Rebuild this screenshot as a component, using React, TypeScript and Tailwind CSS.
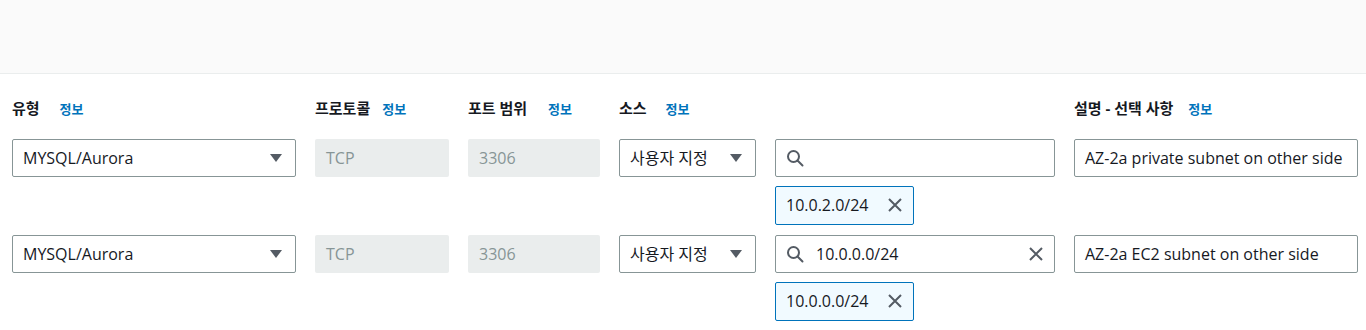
import React from "react";

// ── Data ───────────────────────────────────────────────────────────────────────

type Rule = {
  type: string;
  protocol: string;
  port: string;
  source: string;
  query: string;
  token: string;
  description: string;
};

const RULES: Rule[] = [
  {
    type: "MYSQL/Aurora",
    protocol: "TCP",
    port: "3306",
    source: "사용자 지정",
    query: "",
    token: "10.0.2.0/24",
    description: "AZ-2a private subnet on other side",
  },
  {
    type: "MYSQL/Aurora",
    protocol: "TCP",
    port: "3306",
    source: "사용자 지정",
    query: "10.0.0.0/24",
    token: "10.0.0.0/24",
    description: "AZ-2a EC2 subnet on other side",
  },
];

const FONT = "font-['Open_Sans','Noto_Sans_CJK_KR',sans-serif]";

// ── Icons ──────────────────────────────────────────────────────────────────────

function Caret() {
  return (
    <svg width="14" height="10" viewBox="0 0 14 10" className="shrink-0">
      <path d="M1 1h12L7 9z" fill="#545b64" />
    </svg>
  );
}

function SearchIcon() {
  return (
    <svg width="18" height="18" viewBox="0 0 18 18" className="shrink-0">
      <circle cx="7.5" cy="7.5" r="5.5" fill="none" stroke="#545b64" strokeWidth="2" />
      <path d="M11.5 11.5l5 5" stroke="#545b64" strokeWidth="2" strokeLinecap="round" />
    </svg>
  );
}

function XIcon() {
  return (
    <svg width="16" height="16" viewBox="0 0 16 16" className="shrink-0">
      <path d="M2 2l12 12M14 2L2 14" stroke="#545b64" strokeWidth="2" />
    </svg>
  );
}

// ── Pieces ─────────────────────────────────────────────────────────────────────

function Label({ text, gap }: { text: string; gap: string }) {
  return (
    <div className={`flex items-baseline ${gap}`}>
      <span className="text-[15px] font-bold text-[#16191f]">{text}</span>
      <span className="text-[13px] font-bold text-[#0073bb]">정보</span>
    </div>
  );
}

function SelectBox({ value }: { value: string }) {
  return (
    <div className="flex h-[38px] items-center justify-between rounded-[2px] border border-[#879596] bg-white pl-[10px] pr-[12px] text-[16px] text-[#16191f]">
      <span>{value}</span>
      <Caret />
    </div>
  );
}

function DisabledBox({ value }: { value: string }) {
  return (
    <div className="flex h-[38px] items-center rounded-[2px] bg-[#eaeded] px-[11px] text-[16px] text-[#879596]">
      {value}
    </div>
  );
}

function Token({ value }: { value: string }) {
  return (
    <div className="mt-[9px] flex h-[39px] w-[139px] items-center justify-between rounded-[2px] border border-[#0073bb] bg-[#f1faff] pl-[10px] pr-[10px] text-[16px] text-[#16191f]">
      <span>{value}</span>
      <XIcon />
    </div>
  );
}

function SearchBox({ query }: { query: string }) {
  return (
    <div className="flex h-[38px] items-center gap-[12px] rounded-[2px] border border-[#879596] bg-white pl-[10px] pr-[10px] text-[16px] text-[#16191f]">
      <SearchIcon />
      <span className="flex-1">{query}</span>
      {query && <XIcon />}
    </div>
  );
}

// ── Main ───────────────────────────────────────────────────────────────────────

export default function App() {
  return (
    <div className={`h-[330px] w-[1366px] overflow-hidden bg-white ${FONT}`}>
      <div className="h-[74px] border-b border-[#eaeded] bg-[#fafafa]" />

      <div className="grid grid-cols-[284px_134px_132px_137px_280px_284px] gap-x-[19px] pl-[12px]">
        {/* Header */}
        <div className="pt-[23px] pb-[19px]"><Label text="유형" gap="gap-[20px]" /></div>
        <div className="pt-[23px]"><Label text="프로토콜" gap="gap-[12px]" /></div>
        <div className="pt-[23px]"><Label text="포트 범위" gap="gap-[21px]" /></div>
        <div className="pt-[23px]"><Label text="소스" gap="gap-[19px]" /></div>
        <div />
        <div className="pt-[23px]"><Label text="설명 - 선택 사항" gap="gap-[15px]" /></div>

        {RULES.map((r, i) => (
          <React.Fragment key={i}>
            <div><SelectBox value={r.type} /></div>
            <div><DisabledBox value={r.protocol} /></div>
            <div><DisabledBox value={r.port} /></div>
            <div><SelectBox value={r.source} /></div>
            <div className="mb-[10px]">
              <SearchBox query={r.query} />
              <Token value={r.token} />
            </div>
            <div>
              <div className="flex h-[38px] items-center rounded-[2px] border border-[#879596] bg-white px-[10px] text-[16px] text-[#16191f] whitespace-nowrap">
                {r.description}
              </div>
            </div>
          </React.Fragment>
        ))}
      </div>
    </div>
  );
}
